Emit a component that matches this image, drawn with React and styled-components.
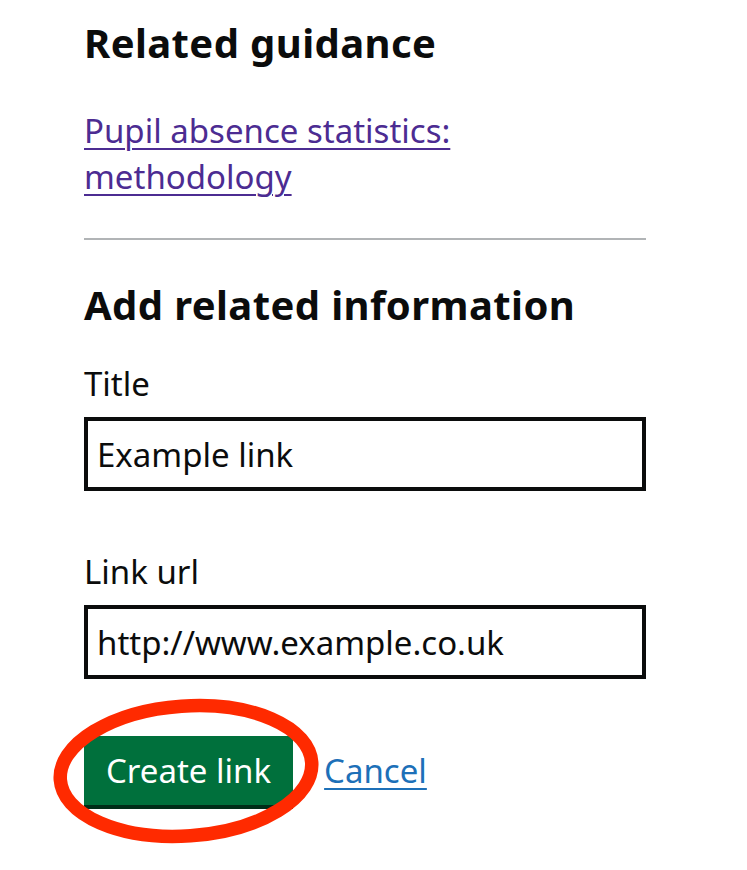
import React from "react";
import styled, { createGlobalStyle } from "styled-components";

const GlobalStyle = createGlobalStyle`
  html, body {
    margin: 0;
    padding: 0;
    background: #ffffff;
  }
  body {
    font-family: "Noto Sans", "Liberation Sans", Arial, sans-serif;
    color: #0b0c0c;
  }
`;

const Page = styled.div`
  padding: 15px 0 40px 84px;
  width: 562px;
`;

const Heading = styled.h2`
  margin: ${(p) => p.$mt || 0}px 0 0;
  font-size: 40px;
  line-height: 55px;
  font-weight: 700;
  letter-spacing: 0.4px;
  color: #0b0c0c;
`;

const LinkList = styled.ul`
  list-style: none;
  margin: 38px 0 0;
  padding: 0;
`;

const Link = styled.a`
  font-size: 33px;
  line-height: 46px;
  color: ${(p) => (p.$visited ? "#4c2c92" : "#1d70b8")};
  text-decoration: underline;
  text-decoration-thickness: 2px;
  text-underline-offset: 5px;
  cursor: pointer;
`;

const Divider = styled.hr`
  margin: 38px 0 0;
  border: 0;
  height: 2px;
  background: #b1b4b6;
`;

const Field = styled.div`
  margin-top: ${(p) => p.$mt}px;
  display: flex;
  flex-direction: column;
`;

const Label = styled.label`
  font-size: 33px;
  line-height: 46px;
  color: #0b0c0c;
  margin-bottom: 10px;
`;

const Input = styled.input`
  box-sizing: border-box;
  width: 100%;
  height: 74px;
  margin: 0;
  padding: 0 9px;
  border: 4px solid #0b0c0c;
  border-radius: 0;
  font-family: "Noto Sans", "Liberation Sans", Arial, sans-serif;
  font-size: 33px;
  color: #0b0c0c;
  background: #fff;
  outline: none;
`;

const ButtonRow = styled.div`
  position: relative;
  margin-top: 57px;
  display: flex;
  align-items: center;
  gap: 31px;
`;

const Button = styled.button`
  box-sizing: border-box;
  height: 69px;
  padding: 0 22px;
  border: 0;
  border-radius: 0;
  background: #00703c;
  box-shadow: 0 4px 0 #002d18;
  color: #ffffff;
  font-family: "Noto Sans", "Liberation Sans", Arial, sans-serif;
  font-size: 33px;
  line-height: 1;
  cursor: pointer;
`;

const Annotation = styled.svg`
  position: absolute;
  left: -40px;
  top: -45px;
  width: 280px;
  height: 160px;
  pointer-events: none;
  overflow: visible;
`;

export default function App() {
  return (
    <>
      <GlobalStyle />
      <Page>
        <Heading>Related guidance</Heading>
        <LinkList>
          <li>
            <Link $visited href="#">
              Pupil absence statistics: methodology
            </Link>
          </li>
        </LinkList>
        <Divider />
        <Heading $mt={37}>Add related information</Heading>
        <Field $mt={29}>
          <Label htmlFor="title">Title</Label>
          <Input id="title" defaultValue="Example link" />
        </Field>
        <Field $mt={58}>
          <Label htmlFor="url">Link url</Label>
          <Input id="url" defaultValue="http://www.example.co.uk" />
        </Field>
        <ButtonRow>
          <Button type="button">Create link</Button>
          <Link href="#">Cancel</Link>
          <Annotation viewBox="0 0 280 160">
            <ellipse
              cx="142"
              cy="80"
              rx="126"
              ry="65"
              fill="none"
              stroke="#ff2a00"
              strokeWidth="13.5"
              transform="rotate(-4 142 80)"
            />
          </Annotation>
        </ButtonRow>
      </Page>
    </>
  );
}
